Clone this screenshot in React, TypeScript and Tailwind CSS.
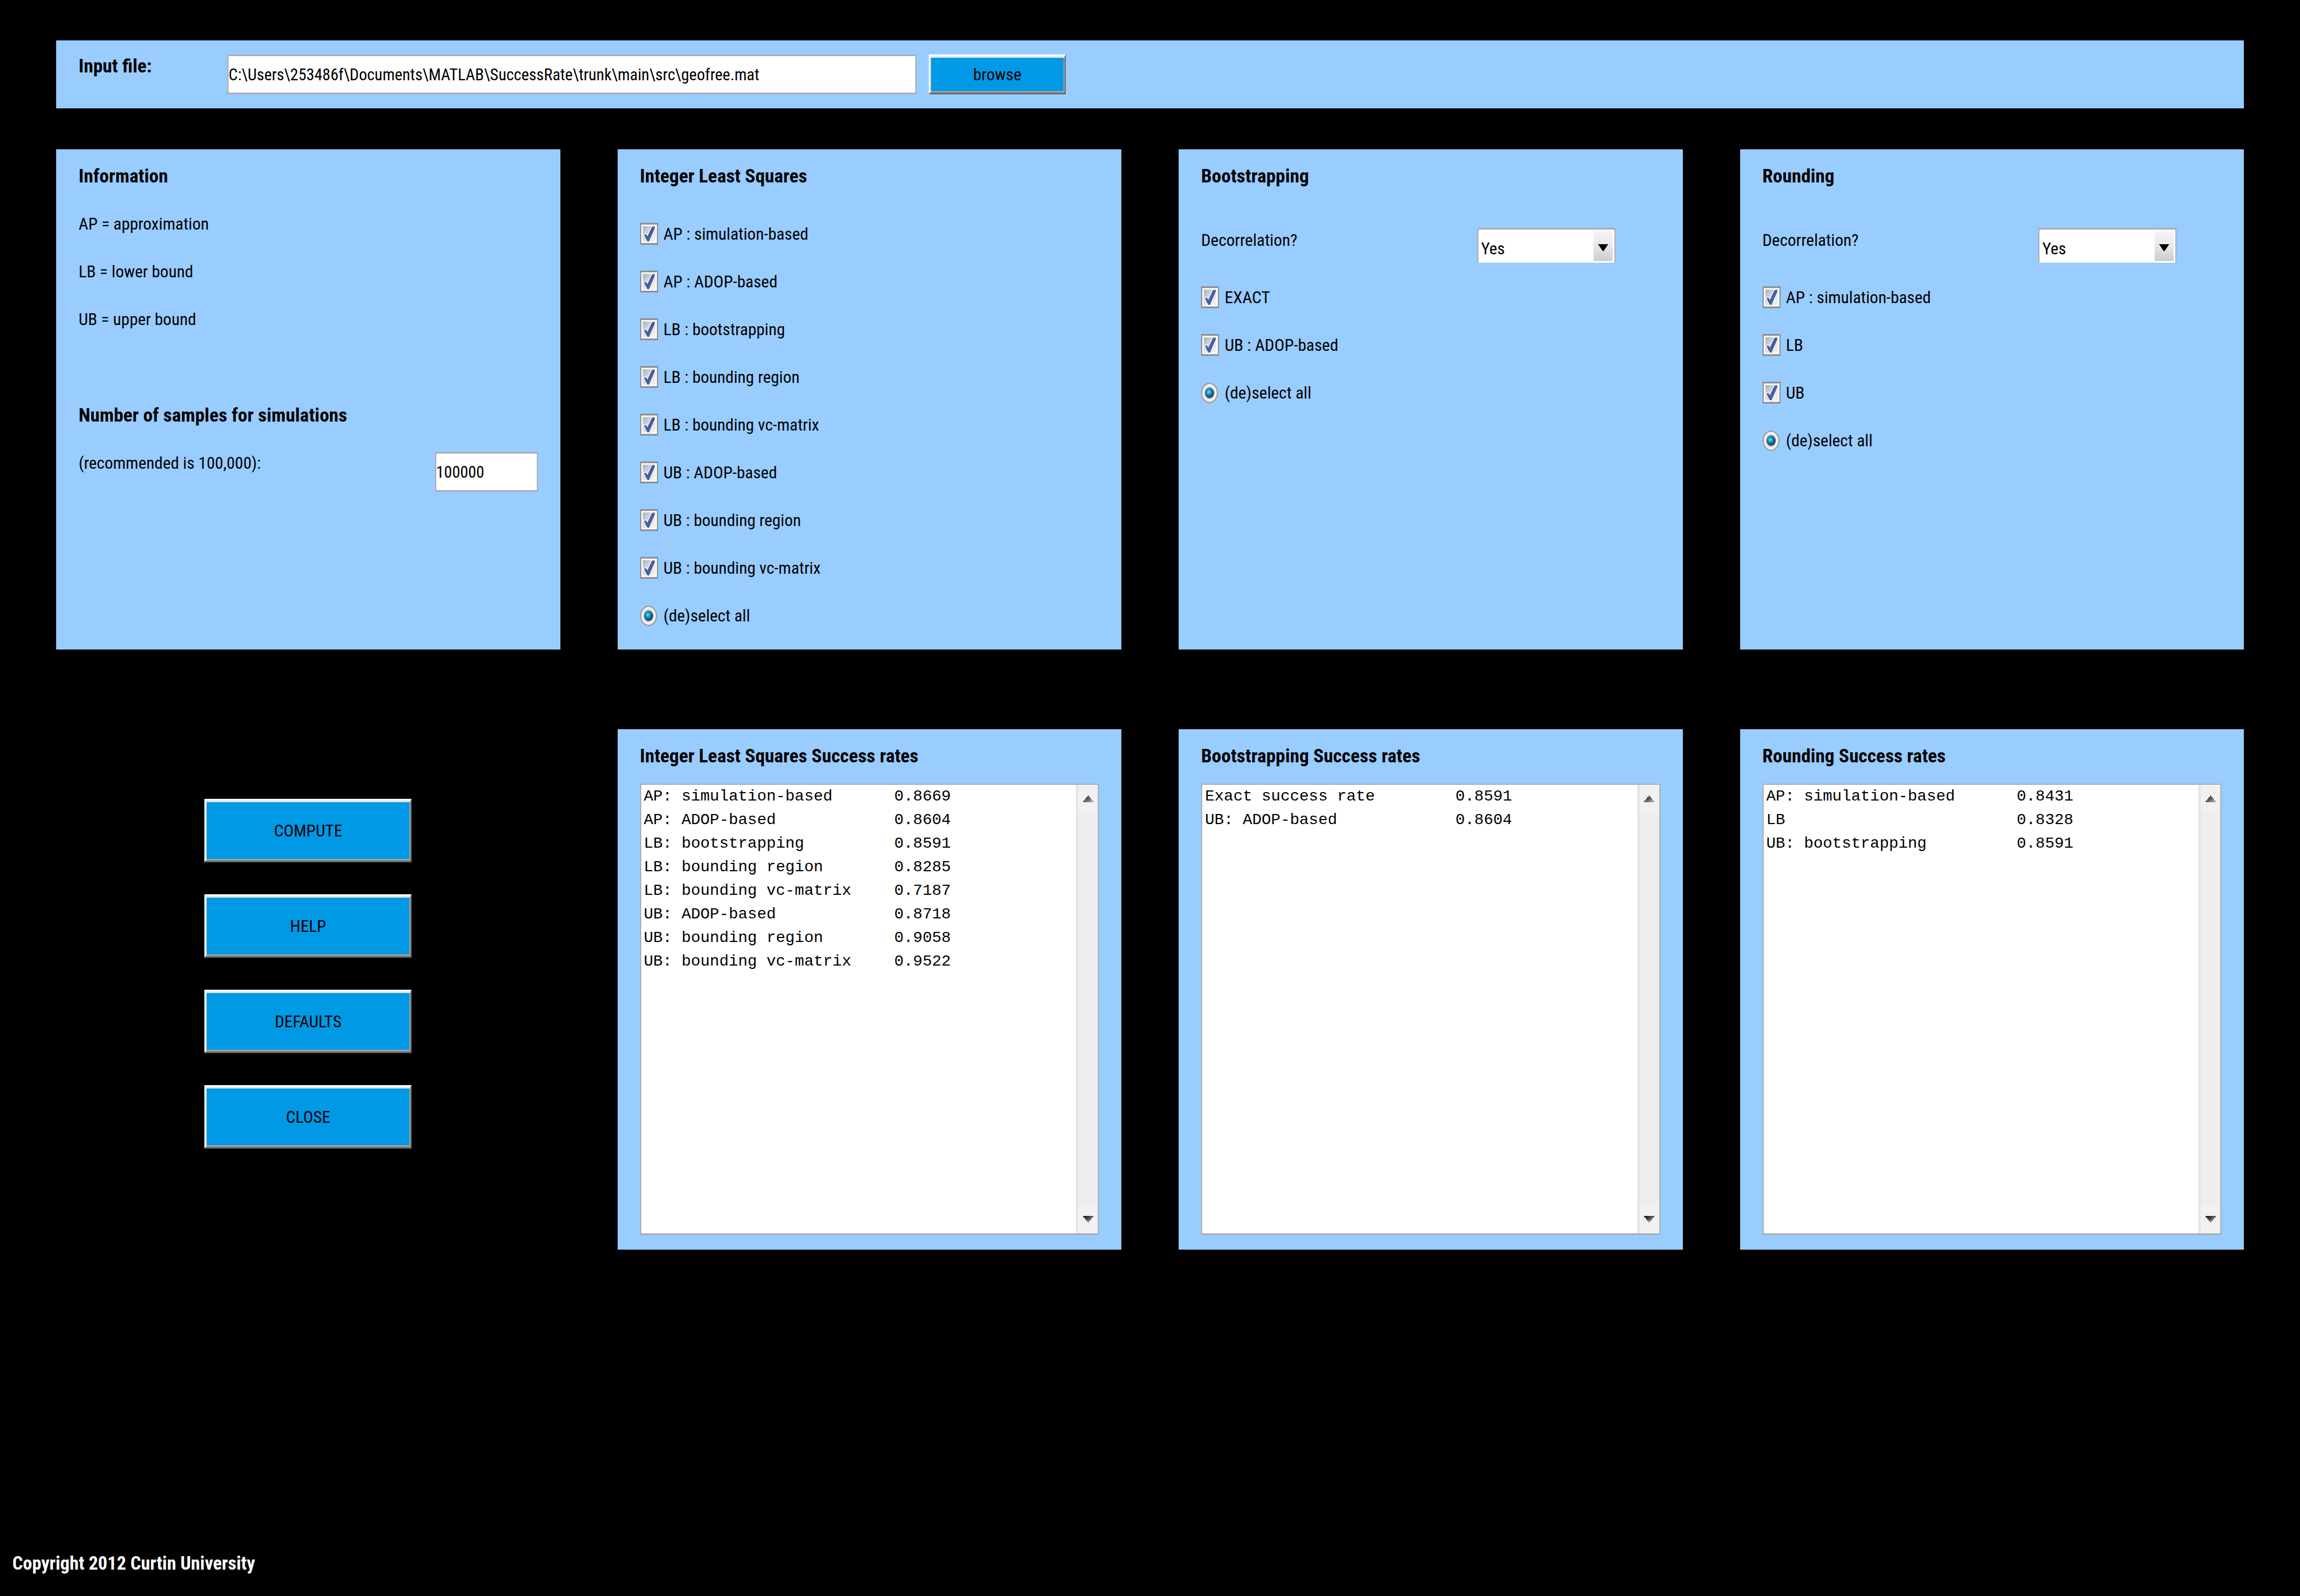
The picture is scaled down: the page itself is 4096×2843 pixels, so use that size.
import { useId, type ReactNode } from "react";

type Rate = [name: string, value: string];

const ilsOptions = [
  "AP : simulation-based",
  "AP : ADOP-based",
  "LB : bootstrapping",
  "LB : bounding region",
  "LB : bounding vc-matrix",
  "UB : ADOP-based",
  "UB : bounding region",
  "UB : bounding vc-matrix",
];

const ilsRates: Rate[] = [
  ["AP: simulation-based", "0.8669"],
  ["AP: ADOP-based", "0.8604"],
  ["LB: bootstrapping", "0.8591"],
  ["LB: bounding region", "0.8285"],
  ["LB: bounding vc-matrix", "0.7187"],
  ["UB: ADOP-based", "0.8718"],
  ["UB: bounding region", "0.9058"],
  ["UB: bounding vc-matrix", "0.9522"],
];

const bootstrappingRates: Rate[] = [
  ["Exact success rate", "0.8591"],
  ["UB: ADOP-based", "0.8604"],
];

const roundingRates: Rate[] = [
  ["AP: simulation-based", "0.8431"],
  ["LB", "0.8328"],
  ["UB: bootstrapping", "0.8591"],
];

const fieldClass =
  "h-[71px] border-x-2 border-y-3 border-[#abadb3] bg-white text-[29px] text-black outline-none";

const buttonClass =
  "border-x-2 border-y-3 border-t-white border-l-white border-r-[#696969] border-b-[#696969] bg-[#0099e6] text-black shadow-[inset_2px_3px_0_#dfe5e8,inset_-2px_-3px_0_#a0a0a0]";

function Panel({ title, children }: { title: string; children: ReactNode }) {
  return (
    <section className="flex flex-col bg-[#99ccff] px-10 pt-[5px]">
      <h2 className="text-[34px] leading-[85px] font-bold">{title}</h2>
      {children}
    </section>
  );
}

function CheckRow({ label }: { label: string }) {
  return (
    <label className="flex h-[85px] items-center gap-[10px]">
      <span className="grid w-8">
        <input
          type="checkbox"
          defaultChecked
          className="peer h-[39px] w-8 appearance-none border-x-2 border-y-3 border-[#8e8f8f] bg-[#f6f6f6] [grid-area:1/1]"
        />
        <svg
          viewBox="0 0 32 39"
          className="pointer-events-none invisible h-[39px] w-8 [grid-area:1/1] peer-checked:visible"
          aria-hidden="true"
        >
          <defs>
            <linearGradient id="well" x1="0" y1="0" x2="1" y2="1">
              <stop offset="0" stopColor="#a9afb9" />
              <stop offset="0.5" stopColor="#dcdfe4" />
              <stop offset="1" stopColor="#f3f3f4" />
            </linearGradient>
          </defs>
          <rect x="5" y="6" width="22" height="27" fill="url(#well)" />
          <path
            d="M7 21 L10 20 L13 24 L21 7 L26 6 L26 10 L18 28 L16 33 L13 33 L10 28 Z"
            fill="#4a5f9e"
            stroke="#f2f4f8"
            strokeWidth="3"
            paintOrder="stroke"
          />
        </svg>
      </span>
      {label}
    </label>
  );
}

function SelectAllRow() {
  return (
    <label className="flex h-[85px] items-center gap-[10px]">
      <span className="grid w-8">
        <input
          type="radio"
          defaultChecked
          className="peer h-9 w-[30px] appearance-none rounded-[50%] border-2 border-[#9a9a98] bg-[#f1efeb] [grid-area:1/1]"
        />
        <svg
          viewBox="0 0 30 36"
          className="pointer-events-none invisible h-9 w-[30px] [grid-area:1/1] peer-checked:visible"
          aria-hidden="true"
        >
          <defs>
            <radialGradient id="bead" cx="0.42" cy="0.4" r="0.6">
              <stop offset="0" stopColor="#7fdcff" />
              <stop offset="0.35" stopColor="#1f9fd8" />
              <stop offset="0.7" stopColor="#14608c" />
              <stop offset="1" stopColor="#1b3a55" />
            </radialGradient>
          </defs>
          <ellipse cx="15" cy="18" rx="9" ry="11" fill="#b9bbbd" />
          <ellipse cx="15" cy="18" rx="8" ry="9" fill="url(#bead)" />
        </svg>
      </span>
      (de)select all
    </label>
  );
}

function DecorrelationRow() {
  const id = useId();
  return (
    <div className="flex h-[131px] items-start justify-between pt-[50px]">
      <label htmlFor={id} className="leading-[44px]">
        Decorrelation?
      </label>
      <div className="mr-20 grid w-[246px] border-x-2 border-t-3 border-[#abadb3] bg-white">
        <select
          id={id}
          defaultValue="Yes"
          className="h-[59px] w-full appearance-none bg-transparent pt-2 pl-[5px] outline-none [grid-area:1/1]"
        >
          <option>Yes</option>
          <option>No</option>
        </select>
        <span className="pointer-events-none mt-[3px] mr-[3px] mb-[3px] flex w-[34px] items-center justify-center justify-self-end bg-linear-to-b from-[#f4f4f4] from-0% via-[#e9e9e9] via-45% to-[#cdcdcd] [grid-area:1/1]">
          <svg viewBox="0 0 18 12" className="mt-1 h-3 w-[18px]" aria-hidden="true">
            <path d="M0 0 H18 L16 3 L10 12 H8 L2 3 Z" fill="#000" />
          </svg>
        </span>
      </div>
    </div>
  );
}

function ScrollArrow({ up = false }: { up?: boolean }) {
  return (
    <button
      type="button"
      aria-label={up ? "Scroll up" : "Scroll down"}
      className="flex h-[50px] w-full items-center justify-center bg-[#f1f1f1]"
    >
      <svg viewBox="0 0 18 12" className="h-3 w-[18px]" aria-hidden="true">
        <defs>
          <linearGradient id="arrow" x1="0" y1="0" x2="1" y2="1">
            <stop offset="0.2" stopColor="#222" />
            <stop offset="1" stopColor="#bbb" />
          </linearGradient>
        </defs>
        <path
          d={
            up
              ? "M8 0 H10 V3 H13 V6 H15 V9 H18 V12 H0 V9 H3 V6 H5 V3 H8 Z"
              : "M0 0 H18 V3 H15 V6 H13 V9 H10 V12 H8 V9 H5 V6 H3 V3 H0 Z"
          }
          fill="url(#arrow)"
        />
      </svg>
    </button>
  );
}

function RatesPanel({ title, rates }: { title: string; rates: Rate[] }) {
  return (
    <Panel title={title}>
      <div className="mt-[7px] mb-[26px] flex h-[804px] justify-between border-x-2 border-t-2 border-b-3 border-[#abadb3] bg-white">
        <div className="pl-[5px]">
          <table className="font-['Liberation_Mono',monospace] text-[28px] leading-[42px]">
            <tbody>
              {rates.map(([name, value]) => (
                <tr key={name}>
                  <th scope="row" className="w-[446px] p-0 text-left font-normal">
                    {name}
                  </th>
                  <td className="p-0">{value}</td>
                </tr>
              ))}
            </tbody>
          </table>
        </div>
        <div className="flex w-[39px] flex-col justify-between border-l-4 border-[#e4e4e4] bg-[#eeeeee]">
          <ScrollArrow up />
          <ScrollArrow />
        </div>
      </div>
    </Panel>
  );
}

export default function App() {
  return (
    <div className="flex min-h-screen flex-col bg-black font-['Roboto_Condensed','Liberation_Sans',sans-serif] text-[30px] text-black">
      <main className="flex flex-col px-[100px] pt-[72px]">
        <section className="flex h-[121px] items-start bg-[#99ccff] px-10 pt-[25px]">
          <label htmlFor="input-file" className="w-[265px] text-[34px] leading-[40px] font-bold">
            Input file:
          </label>
          <input
            id="input-file"
            type="text"
            defaultValue="C:\Users\253486f\Documents\MATLAB\SuccessRate\trunk\main\src\geofree.mat"
            className={`${fieldClass} w-[1227px]`}
          />
          <button type="button" className={`${buttonClass} ml-[22px] h-[71px] w-[244px]`}>
            browse
          </button>
        </section>

        <div className="mt-[73px] grid grid-cols-4 gap-x-[102px]">
          <Panel title="Information">
            <p className="leading-[85px]">AP = approximation</p>
            <p className="leading-[85px]">LB = lower bound</p>
            <p className="leading-[85px]">UB = upper bound</p>
            <h2 className="mt-[86px] text-[34px] leading-[85px] font-bold">
              Number of samples for simulations
            </h2>
            <div className="flex items-start justify-between">
              <label htmlFor="samples" className="leading-[85px]">
                (recommended is 100,000):
              </label>
              <input
                id="samples"
                type="text"
                defaultValue="100000"
                className={`${fieldClass} mt-[23px] w-[183px]`}
              />
            </div>
          </Panel>

          <Panel title="Integer Least Squares">
            <div className="pt-[18px] pb-[18px]">
              {ilsOptions.map((option) => (
                <CheckRow key={option} label={option} />
              ))}
              <SelectAllRow />
            </div>
          </Panel>

          <Panel title="Bootstrapping">
            <DecorrelationRow />
            <CheckRow label="EXACT" />
            <CheckRow label="UB : ADOP-based" />
            <SelectAllRow />
          </Panel>

          <Panel title="Rounding">
            <DecorrelationRow />
            <CheckRow label="AP : simulation-based" />
            <CheckRow label="LB" />
            <CheckRow label="UB" />
            <SelectAllRow />
          </Panel>
        </div>

        <div className="mt-[142px] grid grid-cols-4 gap-x-[102px]">
          <div className="flex flex-col items-center gap-[57px] pt-[124px]">
            {["COMPUTE", "HELP", "DEFAULTS", "CLOSE"].map((action) => (
              <button key={action} type="button" className={`${buttonClass} h-[113px] w-[369px]`}>
                {action}
              </button>
            ))}
          </div>
          <RatesPanel title="Integer Least Squares Success rates" rates={ilsRates} />
          <RatesPanel title="Bootstrapping Success rates" rates={bootstrappingRates} />
          <RatesPanel title="Rounding Success rates" rates={roundingRates} />
        </div>
      </main>

      <footer className="mt-auto pb-9 pl-[22px] text-[33px] leading-[44px] font-bold text-white">
        Copyright 2012 Curtin University
      </footer>
    </div>
  );
}
